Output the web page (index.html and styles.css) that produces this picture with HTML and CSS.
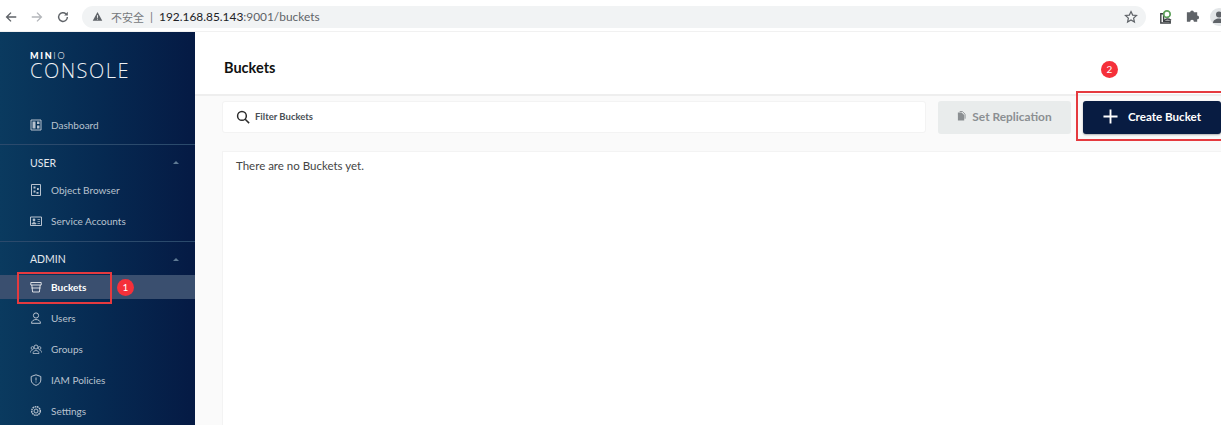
FILE: index.html
```html
<!DOCTYPE html>
<html lang="en">
<head>
<meta charset="utf-8">
<title>Buckets</title>
<link rel="stylesheet" href="styles.css">
</head>
<body>
<div class="shot">
  <header class="chrome">
    <svg class="nav-icon" viewBox="0 0 16 16"><path d="M14 8H3M8 3L3 8l5 5" fill="none" stroke="#5f6368" stroke-width="1.6"/></svg>
    <svg class="nav-icon" viewBox="0 0 16 16"><path d="M2 8h11M8 3l5 5-5 5" fill="none" stroke="#b4b7bb" stroke-width="1.6"/></svg>
    <svg class="nav-icon" viewBox="0 0 16 16"><path d="M13 8a5 5 0 1 1-1.5-3.5" fill="none" stroke="#5f6368" stroke-width="1.6"/><path d="M13.5 2v4.2H9.3z" fill="#5f6368"/></svg>
    <div class="omnibox">
      <svg class="warn" viewBox="0 0 12 12"><path d="M6 1l5.2 9.5H.8z" fill="#5f6368"/><path d="M6 4.5v3M6 8.4v1" stroke="#f1f3f4" stroke-width="1"/></svg>
      <span class="insecure">不安全</span><span class="sep">|</span>
      <span class="url">192.168.85.143<span class="url-dim">:9001/buckets</span></span>
      <svg class="star" viewBox="0 0 16 16"><path d="M8 1.800l1.900 4 4.400.5-3.300 3 .9 4.400L8 11.500l-3.900 2.200.9-4.400-3.300-3 4.400-.5z" fill="none" stroke="#5f6368" stroke-width="1.400"/></svg>
    </div>
    <svg class="ext ext-first" viewBox="0 0 16 16"><path d="M3 5h3v8h7v2H3z" fill="none" stroke="#3c4043" stroke-width="1.500"/><circle cx="9.500" cy="5.500" r="3.500" fill="none" stroke="#5da05a" stroke-width="1.800"/><path d="M6 13c2-3 5-3 8-1" fill="none" stroke="#3c4043" stroke-width="1.500"/></svg>
    <svg class="ext" viewBox="0 0 16 16"><path d="M2 5h3.500a2 2 0 0 1 4 0H13v3.500a2 2 0 0 1 0 4V15H9.500a2 2 0 0 0-4 0H2z" fill="#5f6368" transform="translate(0 -1.500)"/></svg>
    <div class="avatar"><svg viewBox="0 0 16 16"><circle cx="8" cy="5.500" r="3" fill="#5f6368"/><path d="M2 14c0-3 3-4.500 6-4.500s6 1.500 6 4.500z" fill="#5f6368"/></svg></div>
  </header>

  <div class="app">
    <aside class="sidebar">
      <div class="logo">
        <div class="logo-mark">MIN<span class="logo-thin">IO</span></div>
        <div class="logo-name">CONSOLE</div>
      </div>
      <nav class="group group-top">
        <a class="item">
          <svg class="icon" viewBox="0 0 12 12"><path d="M1 1h10v10H1z" fill="none" stroke="currentColor"/><path d="M2.500 2.500h3v7h-3zM7 2.500h2.500v2.500H7zM7 6.500h2.500v3H7z" fill="currentColor"/></svg>
          Dashboard
        </a>
      </nav>
      <nav class="group">
        <div class="heading"><span>USER</span><i class="caret"></i></div>
        <a class="item">
          <svg class="icon" viewBox="0 0 12 12"><path d="M1.500.5h9v11h-9z" fill="none" stroke="currentColor"/><path d="M3.500 2.500h2v2h-2zM7 4h1.800v2H7zM3.500 6.500h2v2h-2zM6.500 8h2v1.800h-2z" fill="currentColor"/></svg>
          Object Browser
        </a>
        <a class="item">
          <svg class="icon" viewBox="0 0 12 12"><path d="M.5 2h11v8.500H.5z" fill="none" stroke="currentColor"/><circle cx="4" cy="5" r="1.400" fill="currentColor"/><path d="M2 9c0-2 4-2 4 0zM7.500 4.500h2.500M7.500 6.500h2.500M7.500 8.500h2.500" fill="currentColor" stroke="currentColor" stroke-width=".7"/></svg>
          Service Accounts
        </a>
      </nav>
      <nav class="group group-last">
        <div class="heading"><span>ADMIN</span><i class="caret"></i></div>
        <a class="item item-active">
          <svg class="icon" viewBox="0 0 12 12"><path d="M.8 1.500h10.400v2.500H.8zM1.800 4l.8 7h6.800l.8-7M1.500 7h9" fill="none" stroke="currentColor" stroke-width=".8"/></svg>
          Buckets
        </a>
        <a class="item">
          <svg class="icon" viewBox="0 0 12 12"><circle cx="6" cy="3.500" r="2.600" fill="none" stroke="currentColor"/><path d="M1.500 11.300c0-5 9-5 9 0z" fill="none" stroke="currentColor"/></svg>
          Users
        </a>
        <a class="item">
          <svg class="icon" viewBox="0 0 12 12"><circle cx="6" cy="4" r="2" fill="none" stroke="currentColor" stroke-width=".9"/><circle cx="2.500" cy="5" r="1.400" fill="none" stroke="currentColor" stroke-width=".8"/><circle cx="9.500" cy="5" r="1.400" fill="none" stroke="currentColor" stroke-width=".8"/><path d="M3 10.500c0-4 6-4 6 0zM.5 9.500c0-2 1-2.500 2-2.500M11.500 9.500c0-2-1-2.500-2-2.500" fill="none" stroke="currentColor" stroke-width=".8"/></svg>
          Groups
        </a>
        <a class="item">
          <svg class="icon" viewBox="0 0 12 12"><path d="M6 .8l4.800 1.700v3.500c0 2.800-2.200 4.500-4.800 5.400C3.400 10.500 1.200 8.800 1.200 6V2.500z" fill="none" stroke="currentColor"/><path d="M6 3.500v3M6 7.500v1" stroke="currentColor"/></svg>
          IAM Policies
        </a>
        <a class="item">
          <svg class="icon" viewBox="0 0 12 12"><circle cx="6" cy="6" r="2" fill="none" stroke="currentColor"/><circle cx="6" cy="6" r="4.300" fill="none" stroke="currentColor" stroke-width="1.500" stroke-dasharray="1.700 .6"/></svg>
          Settings
        </a>
      </nav>
    </aside>

    <main class="main">
      <div class="titlebar"><h1 class="title">Buckets</h1></div>
      <div class="content">
        <div class="actions">
          <div class="search">
            <svg class="search-icon" viewBox="0 0 16 16"><circle cx="6.800" cy="6.800" r="5" fill="none" stroke="#2b2b2b" stroke-width="1.700"/><path d="M10.500 10.500L15 15" stroke="#2b2b2b" stroke-width="1.700"/></svg>
            <span class="search-text">Filter Buckets</span>
          </div>
          <button class="btn btn-off">
            <svg class="btn-copy" viewBox="0 0 10 10"><path d="M1 1h4l3 3v6H1z" fill="#8b8f92"/><path d="M3 0h3l3 3v5" fill="none" stroke="#8b8f92"/></svg>
            Set Replication
          </button>
          <button class="btn btn-main">
            <svg class="btn-plus" viewBox="0 0 16 16"><path d="M8 .5v15M.5 8h15" stroke="#fff" stroke-width="2"/></svg>
            Create Bucket
          </button>
        </div>
        <section class="panel">There are no Buckets yet.</section>
      </div>
    </main>
  </div>

  <div class="mark mark-one"></div>
  <div class="mark mark-two"></div>
  <span class="badge badge-one">1</span>
  <span class="badge badge-two">2</span>
</div>
</body>
</html>
```
FILE: styles.css
```css
* { box-sizing: border-box; }
html, body { margin: 0; padding: 0; background: #fff; overflow: hidden; }
.shot { position: relative; width: 1221px; height: 435px; font-family: Lato, "Noto Sans CJK SC", sans-serif; }

.chrome { display: flex; align-items: center; height: 32px; padding: 2px 0 0 4px; background: #fff; border-bottom: 1px solid #f1f1f1; }
.nav-icon { width: 14px; height: 14px; margin-right: 12px; flex: none; }
.omnibox { display: flex; align-items: center; flex: none; width: 1064px; height: 22px; padding: 0 8px 0 10px; background: #f1f3f4; border-radius: 11px; color: #5f6368; }
.warn { width: 11px; height: 11px; margin-right: 8px; }
.insecure { color: #75787c; font-size: 11px; }
.sep { margin: 0 6px 0 6px; color: #75787c; font-size: 12px; }
.url { color: #202124; font-size: 11.900px; }
.url-dim { color: #5f6368; }
.star { width: 14px; height: 14px; margin-left: auto; }
.ext { width: 15px; height: 15px; margin-left: 12px; flex: none; }
.ext-first { margin-left: 12px; }
.avatar { width: 18px; height: 18px; margin-left: 10px; flex: none; border-radius: 50%; background: #e3e6e8; padding: 1px; }
.avatar svg { display: block; width: 16px; height: 16px; }

.app { display: flex; height: 393px; }
.sidebar { width: 195px; flex: none; background: linear-gradient(90deg, #0a3a5f 0%, #062a52 50%, #051a44 100%); color: #b9c3cf; overflow: hidden; }
.logo { height: 77px; padding: 20px 0 0 30px; color: #fff; }
.logo-mark { font-size: 9px; line-height: 8px; font-weight: 900; letter-spacing: 1.700px; }
.logo-thin { font-weight: 300; }
.logo-name { margin-top: 2px; font-size: 20px; line-height: 18px; font-weight: 300; letter-spacing: 1.500px; color: #eef1f4; font-family: "Open Sans", sans-serif; }
.group { border-bottom: 1px solid #2b4a6c; padding-bottom: 4px; }
.group-last { border-bottom: 0; }
.heading { display: flex; align-items: center; justify-content: space-between; height: 29px; padding: 6px 16px 0 30px; margin-bottom: 0; font-size: 10.500px; color: #e4e8ed; }
.heading + .item { margin-top: 0; }
.group:nth-of-type(2) { padding-bottom: 5px; }
.group-last .heading { height: 33px; padding-top: 1px; }
.caret { width: 0; height: 0; border: 3px solid transparent; border-top: 0; border-bottom: 3px solid #5f7a94; }
.item { display: flex; align-items: center; height: 31px; padding-left: 30px; font-size: 10px; color: #b9c3cf; }
.item-active { height: 24px; margin-bottom: 3.500px; background: #3a4f6f; color: #fff; font-weight: 700; }
.icon { width: 12px; height: 12px; margin-right: 9px; flex: none; }

.main { flex: 1; min-width: 0; display: flex; flex-direction: column; background: #fafafa; }
.titlebar { height: 64px; display: flex; align-items: center; padding: 0 0 0 29px; background: #fff; border-bottom: 2px solid #eeeeee; }
.title { margin: 8px 0 0; font-size: 14.500px; font-weight: 700; color: #111; }
.content { flex: 1; display: flex; flex-direction: column; padding: 5px 0 0 27px; }
.actions { display: flex; align-items: center; height: 32px; }
.search { display: flex; align-items: center; width: 704px; height: 32px; padding: 0 0 1px 13px; background: #fff; border: 1px solid #f3f3f3; border-radius: 3px; }
.search-icon { width: 14px; height: 14px; margin-right: 5px; }
.search-text { font-size: 9.500px; font-weight: 700; color: #4a4f55; }
.btn { display: flex; align-items: center; justify-content: center; height: 33px; flex: none; border: 0; border-radius: 3px; font-family: inherit; padding: 0 0 2px; }
.btn-off { width: 133px; margin-left: 12px; background: #e9ecec; color: #8b8f92; font-size: 11.900px; font-weight: 700; }
.btn-copy { width: 9px; height: 10px; margin-right: 6px; }
.btn-main { width: 138px; margin-left: 12px; background: #081c42; color: #fff; font-size: 11.600px; font-weight: 700; box-shadow: 0 1px 2px rgba(0,0,0,.3); }
.btn-plus { width: 15px; height: 15px; margin: 0 10px 0 0; }
.panel { flex: 1; margin-top: 18px; padding: 7px 13px; background: #fff; border: 1px solid #f3f3f3; border-right: 0; border-bottom: 0; font-size: 11.500px; color: #444; }

.mark { position: absolute; border: 2px solid #e53a3f; }
.mark-one { left: 17px; top: 272px; width: 95px; height: 32px; }
.mark-two { left: 1076px; top: 91px; width: 150px; height: 50px; }
.badge { position: absolute; width: 17px; height: 17px; border-radius: 50%; background: #f5303a; color: #fff; font-size: 10px; line-height: 17px; text-align: center; }
.badge-one { left: 117px; top: 279px; }
.badge-two { left: 1101px; top: 61px; }
```
